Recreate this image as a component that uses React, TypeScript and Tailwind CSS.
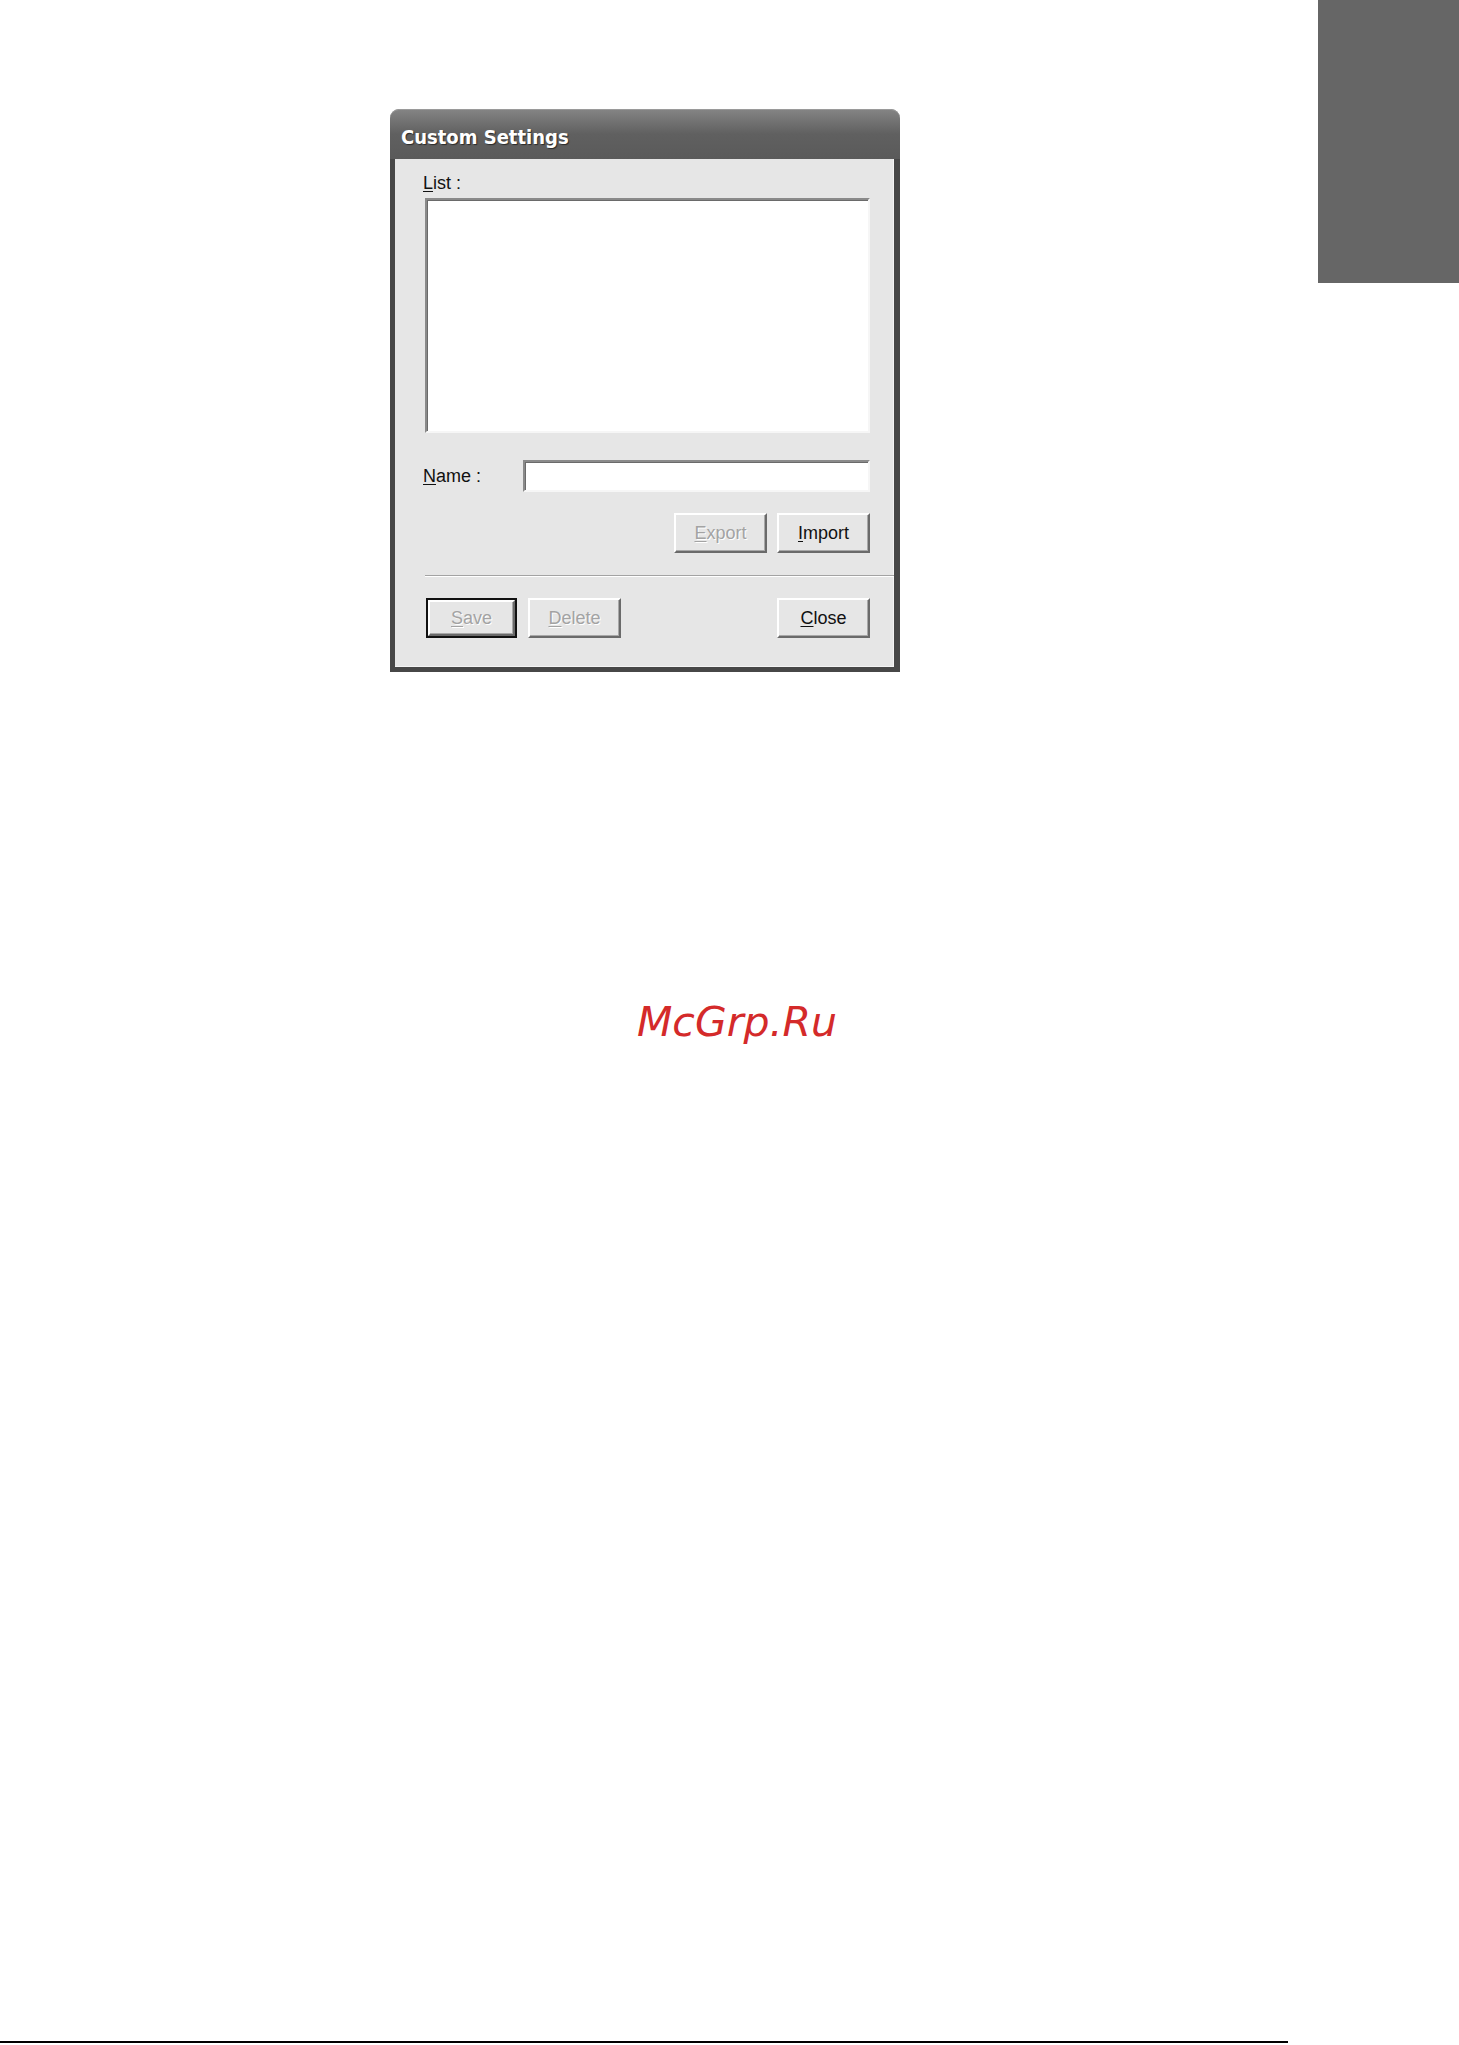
import React from "react";

const font = { fontFamily: '"Liberation Sans", Arial, sans-serif' };

function Btn({
  label,
  u,
  disabled,
  isDefault,
  w,
}: {
  label: string;
  u: number;
  disabled?: boolean;
  isDefault?: boolean;
  w: string;
}) {
  const text = (
    <span>
      {label.slice(0, u)}
      <span className="underline underline-offset-[2px]">{label[u]}</span>
      {label.slice(u + 1)}
    </span>
  );
  const inner = (
    <div
      className={`flex h-full w-full items-center justify-center border-2 border-t-white border-l-white border-r-[#6a6a6a] border-b-[#6a6a6a] bg-[#e6e6e6] text-[18px] shadow-[inset_-1px_-1px_0_#a8a8a8] ${
        disabled ? "text-[#a3a3a3] [text-shadow:1px_1px_0_#ffffff]" : "text-[#111]"
      }`}
    >
      {text}
    </div>
  );
  if (isDefault) {
    return <div className={`${w} h-[40px] border-2 border-[#111]`}>{inner}</div>;
  }
  return <div className={`${w} h-[40px]`}>{inner}</div>;
}

export default function App() {
  return (
    <div className="flex min-h-[2045px] w-[1459px] flex-col bg-white" style={font}>
      <div className="flex items-start">
        <div className="ml-[390px] mt-[109px] w-[510px]">
          {/* title bar */}
          <div className="flex h-[50px] items-center rounded-t-[9px] bg-gradient-to-b from-[#858585] via-[#606060] to-[#5a5a5a] pl-[11px] pt-[6px] shadow-[inset_0_1px_0_#9a9a9a]">
            <span
              className="text-[20px] font-bold text-white [text-shadow:1px_1px_1px_#2a2a2a]"
              style={{ fontFamily: '"DejaVu Sans Condensed", "Liberation Sans", sans-serif' }}
            >
              Custom Settings
            </span>
          </div>
          {/* body */}
          <div className="flex flex-col border-l-[5px] border-r-[6px] border-b-[5px] border-[#474747] bg-[#e6e6e6] pb-[29px] shadow-[inset_-1px_-1px_0_#f4f4f4]">
            <div className="ml-[28px] mt-[14px] h-[20px] text-[18px] leading-[20px] text-[#111]">
              <span className="underline underline-offset-[2px]">L</span>ist :
            </div>
            <div className="ml-[30px] mt-[5px] h-[235px] w-[445px] border-2 border-t-[#8a8a8a] border-l-[#8a8a8a] border-r-[#f6f6f6] border-b-[#f6f6f6] bg-white shadow-[inset_1px_1px_0_#6a6a6a]" />
            <div className="ml-[28px] mt-[27px] flex items-center">
              <div className="w-[100px] text-[18px] text-[#111]">
                <span className="underline underline-offset-[2px]">N</span>ame :
              </div>
              <div className="h-[32px] w-[347px] border-2 border-t-[#8a8a8a] border-l-[#8a8a8a] border-r-[#f6f6f6] border-b-[#f6f6f6] bg-white shadow-[inset_1px_1px_0_#6a6a6a]" />
            </div>
            <div className="mr-[24px] mt-[21px] flex justify-end gap-[10px]">
              <Btn label="Export" u={0} disabled w="w-[93px]" />
              <Btn label="Import" u={0} w="w-[93px]" />
            </div>
            <div className="ml-[30px] mt-[22px] h-[2px] border-t border-b border-t-[#a3a3a3] border-b-white" />
            <div className="ml-[31px] mr-[24px] mt-[21px] flex items-center">
              <div className="flex gap-[11px]">
                <Btn label="Save" u={0} disabled isDefault w="w-[91px]" />
                <Btn label="Delete" u={0} disabled w="w-[93px]" />
              </div>
              <div className="ml-auto">
                <Btn label="Close" u={0} w="w-[93px]" />
              </div>
            </div>
          </div>
        </div>
        <div className="ml-auto h-[283px] w-[141px] bg-[#666666]" />
      </div>
      <div
        className="ml-[637px] mt-[330px] text-[41px] italic leading-[40px] text-[#d42a2a]"
        style={{ fontFamily: '"DejaVu Sans", sans-serif', fontStyle: "oblique" }}
      >
        McGrp.Ru
      </div>
      <div className="mb-[2px] mt-auto h-[2px] w-[1288px] bg-black" />
    </div>
  );
}
